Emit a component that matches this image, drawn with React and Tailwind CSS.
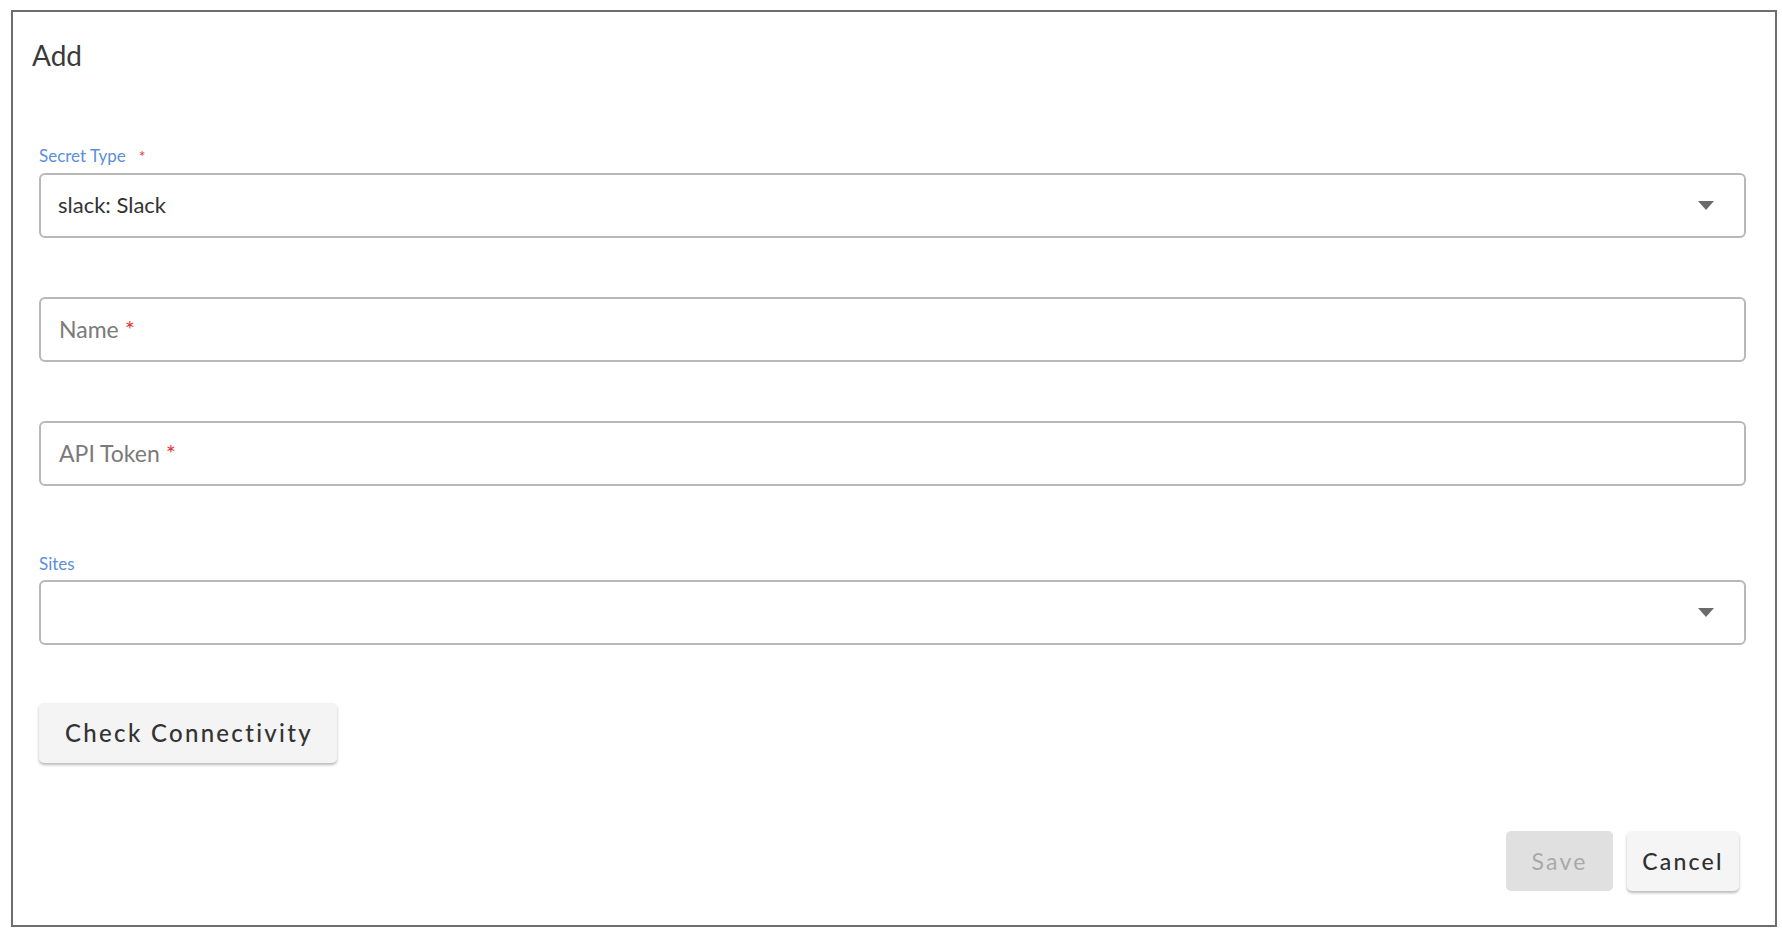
const FONT = "font-['Lato','Liberation_Sans',sans-serif]";

function Caret() {
  return (
    <svg width="16" height="9" viewBox="0 0 16 9" className="shrink-0">
      <path d="M0 0 L16 0 L8 9 Z" fill="#6b6b6b" />
    </svg>
  );
}

function FieldLabel({ text, required }) {
  return (
    <div className="h-[19px] text-[17px] leading-[19px] text-[#5a8fdc] flex">
      <span>{text}</span>
      {required && <span className="ml-[13px] text-[#e53935] text-[16px]">*</span>}
    </div>
  );
}

function SelectBox({ value }) {
  return (
    <div className="h-[65px] border-2 border-[#b8b8b8] rounded-[6px] flex items-center pl-[17px] pr-[30px]">
      <div className="flex-1 text-[22px] leading-[1.2] text-[#333]">{value}</div>
      <Caret />
    </div>
  );
}

function TextBox({ placeholder }) {
  return (
    <div className="h-[65px] border-2 border-[#b8b8b8] rounded-[6px] flex items-center pl-[18px]">
      <span className="text-[23px] leading-[1.2] text-[#7a7a7a]">{placeholder}</span>
      <span className="ml-[6px] text-[24px] leading-[1.2] text-[#e53935]">*</span>
    </div>
  );
}

export default function App() {
  return (
    <div className={`${FONT} bg-white w-[1782px] h-[940px] pt-[10px] pl-[11px]`}>
      <div className="w-[1766px] h-[917px] border-2 border-[#6e6e6e] flex flex-col">
        {/* Header */}
        <div className="mt-[26px] ml-[19px] text-[28px] leading-[34px] text-[#3a3a3a]">Add</div>

        {/* Form */}
        <div className="pl-[26px] pr-[29px] flex flex-col">
          <div className="mt-[74px]">
            <FieldLabel text="Secret Type" required />
          </div>
          <div className="mt-[8px]">
            <SelectBox value="slack: Slack" />
          </div>
          <div className="mt-[59px]">
            <TextBox placeholder="Name" />
          </div>
          <div className="mt-[59px]">
            <TextBox placeholder="API Token" />
          </div>
          <div className="mt-[68px]">
            <FieldLabel text="Sites" />
          </div>
          <div className="mt-[7px]">
            <SelectBox value="" />
          </div>
          <div className="mt-[58px]">
            <button className="h-[60px] w-[298px] bg-[#f4f4f4] rounded-[5px] shadow-[0_2px_3px_rgba(0,0,0,0.28)] text-[24px] tracking-[2.3px] text-[#333] font-medium pl-[2px]">
              Check Connectivity
            </button>
          </div>
        </div>

        {/* Actions */}
        <div className="mt-[68px] pr-[36px] flex justify-end gap-[14px]">
          <button disabled className="h-[60px] w-[107px] bg-[#e0e0e0] rounded-[5px] text-[23px] tracking-[2.2px] text-[#a9a9a9]">
            Save
          </button>
          <button className="h-[60px] w-[112px] bg-[#f5f5f5] rounded-[5px] shadow-[0_2px_3px_rgba(0,0,0,0.28)] text-[23px] tracking-[2.2px] text-[#2f2f2f] font-medium">
            Cancel
          </button>
        </div>
      </div>
    </div>
  );
}
